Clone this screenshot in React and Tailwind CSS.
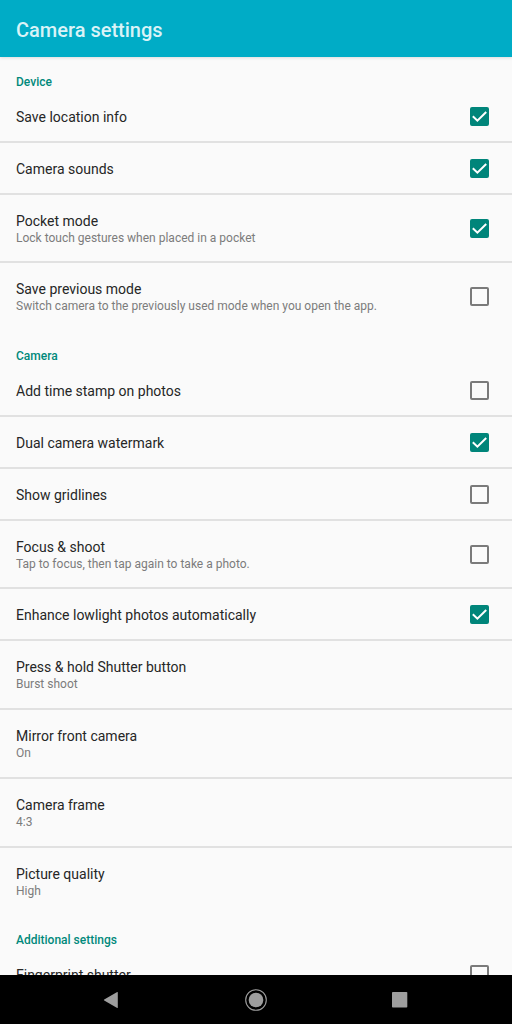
import { useId, useState } from "react";

const sections = [
  {
    title: "Device",
    items: [
      { title: "Save location info", checked: true },
      { title: "Camera sounds", checked: true },
      { title: "Pocket mode", detail: "Lock touch gestures when placed in a pocket", checked: true },
      {
        title: "Save previous mode",
        detail: "Switch camera to the previously used mode when you open the app.",
        checked: false,
      },
    ],
  },
  {
    title: "Camera",
    items: [
      { title: "Add time stamp on photos", checked: false },
      { title: "Dual camera watermark", checked: true },
      { title: "Show gridlines", checked: false },
      { title: "Focus & shoot", detail: "Tap to focus, then tap again to take a photo.", checked: false },
      { title: "Enhance lowlight photos automatically", checked: true },
      { title: "Press & hold Shutter button", detail: "Burst shoot" },
      { title: "Mirror front camera", detail: "On" },
      { title: "Camera frame", detail: "4:3" },
      { title: "Picture quality", detail: "High" },
    ],
  },
  {
    title: "Additional settings",
    items: [{ title: "Fingerprint shutter", checked: false }],
  },
];

function RowText({ title, detail }) {
  return (
    <span className="flex min-w-0 flex-1 flex-col pt-0.5">
      <span className="text-sm leading-[18px] text-[#262626]">{title}</span>
      {detail && <span className="text-xs leading-4 text-[#7c7c7c]">{detail}</span>}
    </span>
  );
}

function ToggleRow({ item }) {
  const id = useId();
  const [on, setOn] = useState(item.checked);
  const height = item.detail ? "min-h-[66px]" : "min-h-[50px]";
  return (
    <li className="border-b-2 border-[#e1e1e1] last:border-transparent">
      <label htmlFor={id} className={`flex items-center gap-4 pr-[23px] pl-4 ${height}`}>
        <RowText title={item.title} detail={item.detail} />
        <span className="grid shrink-0 place-items-center">
          <input
            id={id}
            type="checkbox"
            checked={on}
            onChange={() => setOn(!on)}
            className="peer col-start-1 row-start-1 size-[19px] appearance-none rounded-xs border-2 border-[#7a7a7a] checked:border-[#00857a] checked:bg-[#00857a]"
          />
          <svg
            viewBox="0 0 19 19"
            className="pointer-events-none invisible col-start-1 row-start-1 size-[19px] peer-checked:visible"
            fill="none"
            stroke="#fff"
            strokeWidth="2"
            aria-hidden="true"
          >
            <path d="M2.8 9.3 7.4 13.7 16.2 5" />
          </svg>
        </span>
      </label>
    </li>
  );
}

function ValueRow({ item }) {
  return (
    <li className="border-b-2 border-[#e1e1e1] last:border-b-0">
      <button type="button" className="flex min-h-[67px] w-full items-center px-4 pb-0.5 text-left">
        <RowText title={item.title} detail={item.detail} />
      </button>
    </li>
  );
}

export default function App() {
  return (
    <div className="flex h-screen flex-col bg-[#fafafa] font-['Roboto',sans-serif]">
      <header className="z-10 flex h-[57px] shrink-0 items-center bg-[#00acc6] px-4 pt-0.5 shadow-[0_1px_3px_rgba(0,0,0,0.12)]">
        <h1 className="text-xl font-medium text-[#d9f3f7]">Camera settings</h1>
      </header>
      <main className="min-h-0 flex-1 overflow-y-auto [scrollbar-width:none]">
        {sections.map((section) => (
          <section key={section.title}>
            <h2 className="px-4 pt-4 text-xs leading-[18px] font-medium text-[#00897b]">{section.title}</h2>
            <ul>
              {section.items.map((item) =>
                item.checked === undefined ? (
                  <ValueRow key={item.title} item={item} />
                ) : (
                  <ToggleRow key={item.title} item={item} />
                ),
              )}
            </ul>
          </section>
        ))}
      </main>
      <nav aria-label="System" className="flex h-[49px] shrink-0 items-center justify-center bg-black">
        <div className="grid w-[84.375%] grid-cols-3 justify-items-center">
          <button type="button" aria-label="Back">
            <svg viewBox="0 0 24 24" className="size-6 fill-[#9e9e9e]">
              <path d="M17.8 4.4v15.2q0 .7-.6.3L4.2 12.5q-.8-.5 0-1L17.2 4q.6-.3.6.4Z" />
            </svg>
          </button>
          <button type="button" aria-label="Home">
            <svg viewBox="0 0 24 24" className="size-6">
              <circle cx="12" cy="12" r="10.3" fill="none" stroke="#9e9e9e" strokeWidth="1.1" />
              <circle cx="12" cy="12" r="7.3" fill="#9e9e9e" />
            </svg>
          </button>
          <button type="button" aria-label="Recent apps">
            <svg viewBox="0 0 24 24" className="size-6 fill-[#9e9e9e]">
              <rect x="4" y="4" width="15.3" height="15.6" rx=".8" />
            </svg>
          </button>
        </div>
      </nav>
    </div>
  );
}
